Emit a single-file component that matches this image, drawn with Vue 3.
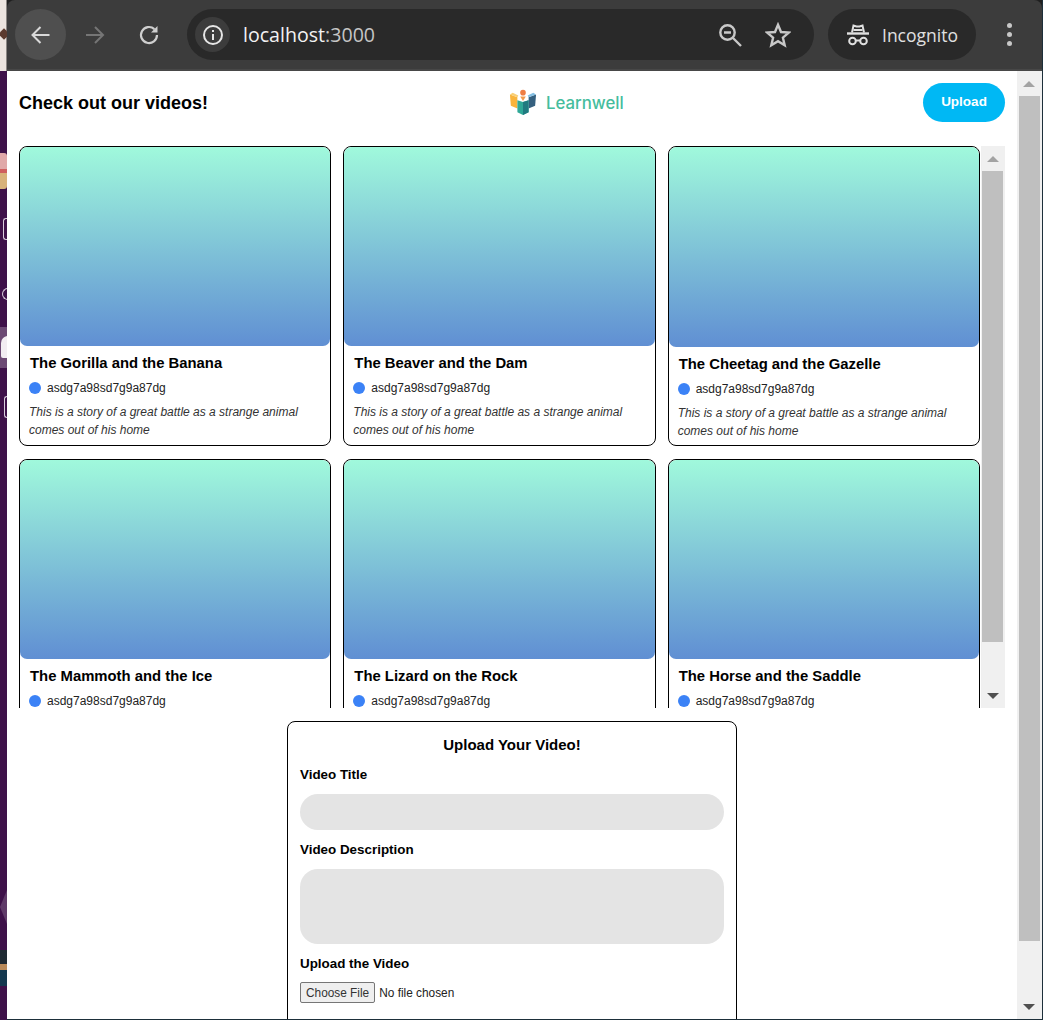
<script setup>
const videos = [
  { title: 'The Gorilla and the Banana' },
  { title: 'The Beaver and the Dam' },
  { title: 'The Cheetag and the Gazelle', tall: true },
  { title: 'The Mammoth and the Ice' },
  { title: 'The Lizard on the Rock' },
  { title: 'The Horse and the Saddle' },
]
</script>

<template>
  <div class="desktop">
    <div class="wall">
      <span class="w-top"></span>
      <span class="w-diamond"></span>
      <span class="w-app"></span>
      <span class="w-glyph g1"></span>
      <span class="w-glyph g2"></span>
      <span class="w-hl"></span>
      <span class="w-shape"></span>
      <span class="w-glyph g3"></span>
      <span class="w-tri"></span>
      <span class="w-pic"></span>
    </div>
    <div class="browser">
      <header class="toolbar">
        <button class="tb-btn round">
          <svg width="24" height="24" viewBox="0 0 24 24" fill="none" stroke="#d9d9d9" stroke-width="2"><path d="M20.500 12H3.500M11.500 4l-8 8 8 8" /></svg>
        </button>
        <button class="tb-btn">
          <svg width="24" height="24" viewBox="0 0 24 24" fill="none" stroke="#757575" stroke-width="2"><path d="M3 12h17M12 4l8 8-8 8" /></svg>
        </button>
        <button class="tb-btn">
          <svg width="24" height="24" viewBox="0 0 24 24" fill="none" stroke="#cfcfcf" stroke-width="2.200"><path d="M20 12a8 8 0 1 1-2.600-5.900" /><path d="M20.500 3v6.500H14" fill="#cfcfcf" stroke="none" /></svg>
        </button>
        <div class="omnibox">
          <span class="info">
            <svg width="24" height="24" viewBox="0 0 24 24" fill="none" stroke="#e6e6e6" stroke-width="2"><circle cx="12" cy="12" r="9" /><path d="M12 11v6M12 7v2" /></svg>
          </span>
          <span class="url"><b>localhost</b>:3000</span>
          <svg class="zoom-ic" width="26" height="26" viewBox="0 0 26 26" fill="none" stroke="#c8c8c8" stroke-width="2.400"><circle cx="10.500" cy="10.500" r="7.200" /><path d="M15.500 15.500 24 24M7 10.500h7" /></svg>
          <svg class="star-ic" width="26" height="26" viewBox="0 0 26 26" fill="none" stroke="#c8c8c8" stroke-width="2.400"><path d="M13 2.800l3 7.200 7.800.6-5.900 5.100 1.800 7.600L13 19.200 6.300 23.300l1.800-7.600-5.900-5.100 7.800-.6z" /></svg>
        </div>
        <div class="profile">
          <svg width="24" height="22" viewBox="0 0 24 22" fill="none" stroke="#e0e0e0" stroke-width="2"><path d="M1 9.500h22" stroke-width="2.400" /><path d="M6 8.500 7.500 1.500l3 1h3l3-1L18 8.500" /><path d="M7.500 6h9" /><circle cx="6.500" cy="17" r="3.300" /><circle cx="17.500" cy="17" r="3.300" /><path d="M10 16.500h4" /></svg>
          <span>Incognito</span>
        </div>
        <div class="kebab"><i></i><i></i><i></i></div>
      </header>

      <div class="viewport">
        <main class="page">
          <div class="top">
            <h1>Check out our videos!</h1>
            <div class="logo">
              <svg width="28" height="28" viewBox="0 0 30 30">
                <path d="M1 7l8 3v12l-7-3z" fill="#f9b43c" />
                <path d="M29 7l-8 3v12l7-3z" fill="#35607f" />
                <path d="M4 5l6 3-1 2-8-3z" fill="#f8cf77" />
                <path d="M26 5l-6 3 1 2 8-3z" fill="#84bfe3" />
                <path d="M9 13l6 2 6-2v13l-6 3-6-3z" fill="#2fa897" />
                <path d="M15 15l6-2v13l-6 3z" fill="#207a80" />
                <circle cx="15" cy="5" r="3" fill="#ef7d43" />
                <path d="M12 9h6l-3 5z" fill="#f29a4c" />
              </svg>
              <span>Learnwell</span>
            </div>
            <button class="upload">Upload</button>
          </div>

          <div class="scroller">
            <div class="grid">
              <article v-for="v in videos" :key="v.title" class="card">
                <div class="thumb" :class="{ tall: v.tall }"></div>
                <div class="body">
                  <h2>{{ v.title }}</h2>
                  <div class="author"><span class="dot"></span>asdg7a98sd7g9a87dg</div>
                  <p>This is a story of a great battle as a strange animal comes out of his home</p>
                </div>
              </article>
            </div>
            <div class="bar inner">
              <span class="arrow up"></span>
              <span class="thumbbar"></span>
              <span class="arrow down"></span>
            </div>
          </div>

          <form class="form" @submit.prevent>
            <h3>Upload Your Video!</h3>
            <label>Video Title</label>
            <div class="field"></div>
            <label>Video Description</label>
            <div class="field area"></div>
            <label>Upload the Video</label>
            <input class="file" type="file" />
          </form>
        </main>
        <div class="bar outer">
          <span class="arrow up"></span>
          <span class="thumbbar"></span>
          <span class="arrow down"></span>
        </div>
      </div>
    </div>
  </div>
</template>

<style>
html, body { margin: 0; padding: 0; overflow: hidden; }
</style>

<style scoped>
.desktop { width: 1043px; height: 1020px; display: flex; background: #1d2f3a; overflow: hidden; font-family: "Liberation Sans", Arial, sans-serif; color: #000; }
.wall { width: 7px; flex: none; position: relative; background: #3e1149; overflow: hidden; }
.wall span { position: absolute; display: block; }
.w-top { left: 0; top: 0; width: 6px; height: 71px; background: #ece4df; border-right: 1px solid #8c8784; }
.w-diamond { left: 0; top: 30px; width: 8px; height: 8px; background: #5b3a2e; transform: rotate(45deg); }
.w-app { left: -5px; top: 153px; width: 12px; height: 36px; background: linear-gradient(#e0a9a9 0 45%, #cf5f5f 45% 55%, #d8b27a 55%); border-radius: 3px; }
.w-glyph { border: 1.500px solid #d9cddc; border-radius: 3px; width: 10px; }
.g1 { left: 3px; top: 218px; height: 20px; border-right: 0; }
.g2 { left: 2px; top: 288px; height: 10px; border-right: 0; border-radius: 6px 0 0 6px; }
.g3 { left: 4px; top: 396px; height: 20px; border-right: 0; }
.w-hl { left: 0; top: 327px; width: 7px; height: 41px; background: #6c4a74; }
.w-shape { left: 1px; top: 336px; width: 8px; height: 22px; background: #f2eef2; border-radius: 7px 0 0 2px; }
.w-tri { left: 0; top: 890px; width: 7px; height: 34px; background: #5f3a68; clip-path: polygon(100% 0, 100% 100%, 0 50%); }
.w-pic { left: 0; top: 950px; width: 7px; height: 36px; background: linear-gradient(#1f2a33 40%, #b98a5a 40% 55%, #14384f 55%); }

.browser { width: 1035px; flex: none; height: 1019px; display: flex; flex-direction: column; background: #1f1f1f; }
.toolbar { height: 71px; flex: none; box-sizing: border-box; background: #3c3c3c; border-bottom: 2px solid #474747; border-radius: 8px 8px 0 0; display: flex; align-items: center; padding: 0 14px 0 8px; }
.tb-btn { width: 51px; height: 51px; margin-right: 3px; border: 0; border-radius: 50%; background: transparent; padding: 0; display: flex; align-items: center; justify-content: center; }
.tb-btn.round { background: #4f4f4f; }
.omnibox { margin-left: 10px; width: 627px; height: 51px; background: #292929; border-radius: 26px; display: flex; align-items: center; padding-left: 8px; box-sizing: border-box; }
.info { width: 35px; height: 35px; border-radius: 50%; background: #3c3c3c; display: flex; align-items: center; justify-content: center; flex: none; }
.url { margin-left: 13px; font: 400 19.600px "Open Sans", sans-serif; color: #c5c5c5; flex: 1; }
.url b { font-weight: 400; color: #f2f2f2; }
.zoom-ic { margin-right: 22px; }
.star-ic { margin-right: 23px; }
.profile { margin-left: 14px; width: 148px; height: 51px; background: #292929; border-radius: 26px; display: flex; align-items: center; box-sizing: border-box; padding-left: 18px; gap: 12px; font: 400 17.500px "Open Sans", sans-serif; color: #e0e0e0; }
.kebab { margin-left: 31px; display: flex; flex-direction: column; gap: 4px; }
.kebab i { width: 5px; height: 5px; border-radius: 50%; background: #c8c8c8; display: block; }

.viewport { flex: 1; min-height: 0; display: flex; background: #fff; }
.page { width: 1010px; flex: none; box-sizing: border-box; padding: 12px 12px 0; overflow: hidden; }
.top { display: flex; align-items: center; justify-content: space-between; height: 39px; position: relative; }
h1 { margin: 2px 0 0; font-size: 18px; font-weight: 700; }
.logo { position: absolute; left: 490px; top: 5px; display: flex; align-items: center; gap: 9px; font: 500 16.800px Inter, "Liberation Sans", sans-serif; color: #45bd9d; }
.logo span { padding-top: 2px; }
.upload { width: 82px; height: 39px; border: 0; border-radius: 20px; padding: 0 0 2px; background: #00b8f4; color: #fff; font: 700 13.500px "Liberation Sans", sans-serif; }

.scroller { margin-top: 24px; height: 562px; display: flex; justify-content: space-between; overflow: hidden; }
.grid { width: 961px; display: grid; grid-template-columns: repeat(3, 1fr); gap: 13px 12px; align-content: start; }
.card { border: 1px solid #000; border-radius: 8px; height: 300px; overflow: hidden; box-sizing: border-box; }
.thumb { height: 199px; background: linear-gradient(#a0f9dc, #608fd3); border-radius: 7px; }
.thumb.tall { height: 200px; }
.body { padding: 7px 10px 0; }
h2 { margin: 0; font-size: 14.850px; line-height: 20px; font-weight: 700; white-space: nowrap; }
.author { display: flex; align-items: center; gap: 6px; margin: 6px 0 0 -1px; font-size: 12px; line-height: 18px; color: #222; }
.dot { width: 12px; height: 12px; border-radius: 50%; background: #3b82f6; flex: none; }
p { margin: 6px 0 0 -1px; font-size: 12px; line-height: 18px; font-style: italic; color: #333; }

.form { width: 450px; height: 400px; box-sizing: border-box; margin: 13px auto 0; border: 1px solid #000; border-radius: 8px; padding: 14px 12px 0; display: flex; flex-direction: column; align-items: flex-start; }
h3 { margin: 0; width: 100%; text-align: center; font-size: 15px; line-height: 18px; font-weight: 700; }
label { font-size: 13.400px; font-weight: 700; line-height: 16px; margin-top: 13px; }
.field { width: 100%; height: 36px; margin: 11px 0 -1px; border-radius: 18px; background: #e4e4e4; }
.field.area { height: 75px; }
.file { margin-top: 10px; font: 11.850px "Liberation Sans", sans-serif; color: #222; }
.file::file-selector-button { height: 21px; padding: 1px 5px; margin-right: 4px; border: 1px solid #767676; border-radius: 2px; background: #efefef; color: #333; font: 11.850px "Liberation Sans", sans-serif; }

.bar { background: #f0f0f0; display: flex; flex-direction: column; align-items: flex-start; box-sizing: border-box; position: relative; flex: none; padding-top: 25px; }
.bar.inner { width: 24px; padding-left: 1px; }
.bar.outer { width: 25px; padding-left: 2px; }
.thumbbar { display: block; background: #bfbfbf; width: 21px; }
.inner .thumbbar { height: 471px; }
.outer .thumbbar { height: 845px; }
.arrow { position: absolute; width: 0; height: 0; border-left: 6px solid transparent; border-right: 6px solid transparent; }
.inner .arrow { left: 6px; }
.outer .arrow { left: 6px; }
.arrow.up { top: 10px; border-bottom: 6px solid #a3a3a3; }
.arrow.down { bottom: 9px; border-top: 6px solid #505050; }
</style>
